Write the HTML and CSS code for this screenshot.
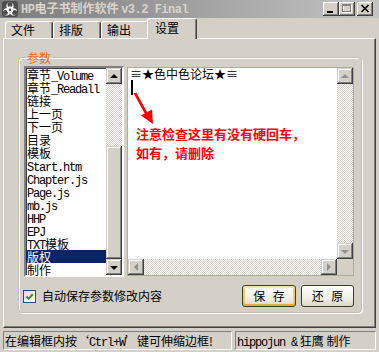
FILE: index.html
```html
<!DOCTYPE html>
<html lang="zh-CN">
<head>
<meta charset="utf-8">
<title>HP电子书制作软件</title>
<link rel="stylesheet" href="styles.css">
</head>
<body>
<div class="window">
  <div class="titlebar">
    <svg class="app-icon" viewBox="0 0 16 16" width="16" height="16">
      <rect x="0" y="0" width="16" height="16" rx="3" fill="#4e4e4e"/>
      <g fill="#fff">
        <circle cx="8" cy="5" r="3.6"/>
        <circle cx="4.6" cy="10.8" r="3.6"/>
        <circle cx="11.4" cy="10.8" r="3.6"/>
      </g>
      <g fill="#4e4e4e">
        <circle cx="8" cy="3.7" r="2.5"/>
        <circle cx="3.4" cy="11.6" r="2.5"/>
        <circle cx="12.6" cy="11.6" r="2.5"/>
        <circle cx="8" cy="8.8" r="1.3"/>
      </g>
      <circle cx="8" cy="8.8" r="3" fill="none" stroke="#fff" stroke-width="1"/>
    </svg>
    <span class="title"><span class="title-en">HP</span>电子书制作软件 <span class="title-en">v3.2 Final</span></span>
    <div class="caption-btns">
      <span class="cbtn"><svg viewBox="0 0 16 14" width="16" height="14"><rect x="4" y="9" width="6" height="2" fill="#000"/></svg></span>
      <span class="cbtn"><svg viewBox="0 0 16 14" width="16" height="14"><rect x="4.5" y="3.5" width="8" height="7" fill="none" stroke="#fff"/><rect x="3.5" y="2.5" width="8" height="7" fill="none" stroke="#808080"/><rect x="3" y="2" width="9" height="2" fill="#808080"/></svg></span>
      <span class="cbtn close"><svg viewBox="0 0 16 14" width="16" height="14"><path d="M4.5 3 L11.5 10 M11.5 3 L4.5 10" stroke="#000" stroke-width="1.6"/></svg></span>
    </div>
  </div>

  <div class="client">
    <div class="tabs">
      <div class="tab">文件</div>
      <div class="tab">排版</div>
      <div class="tab">输出</div>
      <div class="tab active">设置</div>
    </div>

    <div class="panel">
      <fieldset class="group">
        <legend>参数</legend>
        <div class="row-main">
          <div class="listbox">
            <ul class="items">
              <li>章节<span class="en">_Volume</span></li>
              <li>章节<span class="en">_Readall</span></li>
              <li>链接</li>
              <li>上一页</li>
              <li>下一页</li>
              <li>目录</li>
              <li>模板</li>
              <li><span class="en">Start.htm</span></li>
              <li><span class="en">Chapter.js</span></li>
              <li><span class="en">Page.js</span></li>
              <li><span class="en">mb.js</span></li>
              <li><span class="en">HHP</span></li>
              <li><span class="en">EPJ</span></li>
              <li><span class="en">TXT</span>模板</li>
              <li class="sel">版权</li>
              <li>制作</li>
            </ul>
            <div class="vscroll">
              <span class="sb-btn up"></span>
              <span class="sb-track"></span>
              <span class="sb-thumb"></span>
              <span class="sb-btn down"></span>
            </div>
          </div>

          <div class="editor">
            <div class="ed-content">
              <div class="ed-line">≡★色中色论坛★≡</div>
              <span class="caret"></span>
              <svg class="red-arrow" viewBox="0 0 26 32" width="26" height="32">
                <path d="M2 0 L13 20" stroke="#f00" stroke-width="2.6" stroke-linecap="round"/>
                <polygon points="20,31 19,16.5 8,22.5" fill="#f00"/>
              </svg>
              <p class="note">注意检查这里有没有硬回车，<br>如有，请删除</p>
            </div>
            <div class="ed-vscroll">
              <span class="sb-btn up dis"></span>
              <span class="sb-track"></span>
              <span class="sb-btn down dis"></span>
            </div>
            <div class="ed-hscroll">
              <span class="sb-btn left dis"></span>
              <span class="sb-track"></span>
              <span class="sb-btn right dis"></span>
            </div>
            <div class="ed-corner"></div>
          </div>
        </div>

        <div class="row-actions">
          <span class="checkbox"><svg viewBox="0 0 11 11" width="11" height="11"><path d="M2.5 5.5 L4.6 7.8 L8.8 3" fill="none" stroke="#21a121" stroke-width="2"/></svg></span>
          <span class="check-label">自动保存参数修改内容</span>
          <div class="buttons">
            <button class="btn default">保 存</button>
            <button class="btn">还 原</button>
          </div>
        </div>
      </fieldset>
    </div>

    <div class="statusbar">
      <div class="sb-panel left">在编辑框内按‘<span class="en">Ctrl+W</span>’键可伸缩边框!</div>
      <div class="sb-panel right"><span class="en">hippojun &amp;</span> 狂鹰 制作</div>
    </div>
  </div>
</div>
</body>
</html>
```

FILE: styles.css
```css
* { box-sizing: border-box; }

html, body {
  margin: 0;
  padding: 0;
}

body {
  width: 379px;
  height: 352px;
  overflow: hidden;
  background: #d4d0c8;
  color: #000;
  font: 12px/1.2 "Noto Sans CJK SC", "Liberation Sans", sans-serif;
}

.en {
  font-family: "Liberation Mono", monospace;
  font-size: 12px;
  letter-spacing: -1.2px;
}

.window {
  width: 379px;
  height: 352px;
  display: flex;
  flex-direction: column;
}

/* title bar */
.titlebar {
  height: 18px;
  flex: none;
  display: flex;
  align-items: center;
  padding-left: 2px;
  background: linear-gradient(90deg, #7c7c7c, #c4c4c4);
  color: #d8d4cc;
}

.app-icon { flex: none; }

.title {
  margin-left: 3px;
  font-weight: bold;
  white-space: nowrap;
  line-height: 18px;
}

.title-en {
  font-family: "Liberation Mono", monospace;
  font-size: 12px;
  letter-spacing: -0.5px;
}

.caption-btns {
  margin-left: auto;
  margin-right: 6px;
  display: flex;
}

.cbtn {
  display: block;
  width: 16px;
  height: 14px;
  background: #d4d0c8;
  box-shadow: inset -1px -1px #404040, inset 1px 1px #fff, inset -2px -2px #808080;
}

.cbtn svg { display: block; }
.cbtn.close { margin-left: 2px; }

/* client */
.client {
  flex: 1;
  display: flex;
  flex-direction: column;
  padding: 0 3px 0 3px;
}

.tabs {
  height: 20px;
  display: flex;
  align-items: flex-end;
  padding-left: 2px;
  position: relative;
  z-index: 1;
}

.tab {
  width: 48px;
  height: 17px;
  padding-left: 5px;
  line-height: 15px;
  background: #d4d0c8;
  border: 1px solid;
  border-bottom: none;
  border-color: #fff #404040 transparent #fff;
  border-radius: 3px 3px 0 0;
  box-shadow: inset -1px 0 #808080;
}

.tab.active {
  width: 50px;
  height: 21px;
  margin-left: -2px;
  margin-bottom: -1px;
  padding-left: 7px;
  line-height: 17px;
  position: relative;
  z-index: 2;
}

.panel {
  height: 290px;
  border: 1px solid;
  border-color: #fff #404040 #404040 #fff;
  box-shadow: inset -1px -1px #808080;
}

/* group */
.group {
  width: 344px;
  margin: 12px 0 0 14px;
  padding: 2px 7px 5px 5px;
  border: 1px solid #c2beb2;
  border-radius: 4px;
  box-shadow: inset 1px 1px #fff, 1px 1px #fff;
  min-width: 0;
}

.group legend {
  margin-left: 1px;
  padding: 0 2px;
  line-height: 13px;
  color: #e06c2c;
}

.row-main {
  display: flex;
  align-items: flex-start;
  gap: 3px;
}

/* list box */
.listbox {
  width: 100px;
  height: 211px;
  display: flex;
  background: #fff;
  border: 2px solid;
  border-color: #808080 #fff #fff #808080;
  box-shadow: inset 1px 1px #404040;
}

.items {
  flex: 1;
  min-width: 0;
  list-style: none;
  margin: 0;
  padding: 0;
}

.items li {
  height: 13px;
  line-height: 13px;
  padding-left: 1px;
  white-space: nowrap;
}

.items li.sel {
  background: #0a246a;
  color: #fff;
}

.vscroll {
  width: 16px;
  display: flex;
  flex-direction: column;
}

.sb-btn {
  flex: none;
  width: 16px;
  height: 16px;
  display: flex;
  align-items: center;
  justify-content: center;
  background: #d4d0c8;
  box-shadow: inset -1px -1px #404040, inset 1px 1px #d4d0c8, inset -2px -2px #808080, inset 2px 2px #fff;
}

.sb-btn::after {
  content: "";
  width: 0;
  height: 0;
  border: 4px solid transparent;
}

.sb-btn.up::after { border-top: 0; border-bottom-color: #000; margin-top: -1px; }
.sb-btn.down::after { border-bottom: 0; border-top-color: #000; margin-top: 1px; }
.sb-btn.left::after { border-left: 0; border-right-color: #000; }
.sb-btn.right::after { border-right: 0; border-left-color: #000; }

.sb-btn.dis.up::after { border-bottom-color: #909090; }
.sb-btn.dis.down::after { border-top-color: #909090; }
.sb-btn.dis.left::after { border-right-color: #909090; }
.sb-btn.dis.right::after { border-left-color: #909090; }

.sb-track {
  flex: 1;
  background-image: repeating-conic-gradient(#d4d0c8 0 25%, #fff 0 50%);
  background-size: 2px 2px;
}

.sb-thumb {
  flex: none;
  height: 113px;
  background: #d4d0c8;
  box-shadow: inset -1px -1px #404040, inset 1px 1px #d4d0c8, inset -2px -2px #808080, inset 2px 2px #fff;
}

/* editor */
.editor {
  width: 227px;
  height: 209px;
  margin-top: 1px;
  border: 1px solid #a9b094;
  background: #fff;
  display: grid;
  grid-template-columns: 1fr 16px;
  grid-template-rows: 1fr 16px;
}

.ed-content {
  padding-left: 2px;
  min-width: 0;
  min-height: 0;
}

.ed-line {
  height: 12px;
  line-height: 12px;
  white-space: nowrap;
}

.caret {
  display: block;
  width: 2px;
  height: 15px;
  margin-left: 1px;
  background: #000;
}

.red-arrow {
  display: block;
  margin: -2px 0 0 3px;
}

.note {
  margin: -1px 0 0 6px;
  color: #f00;
  font-weight: bold;
  font-size: 13px;
  line-height: 19px;
  white-space: nowrap;
}

.ed-vscroll {
  display: flex;
  flex-direction: column;
}

.ed-hscroll {
  display: flex;
}

.ed-corner { background: #d4d0c8; }

/* action row */
.row-actions {
  display: flex;
  align-items: center;
  height: 22px;
  margin-top: 8px;
}

.checkbox {
  width: 13px;
  height: 13px;
  margin-left: -1px;
  border: 1px solid #1c5180;
  background: linear-gradient(135deg, #dcdcd7, #fff);
}

.checkbox svg { display: block; }

.check-label {
  margin-left: 6px;
  line-height: 14px;
}

.buttons {
  margin-left: auto;
  display: flex;
  gap: 5px;
}

.btn {
  width: 54px;
  height: 22px;
  padding: 0;
  font: inherit;
  line-height: 18px;
  word-spacing: 5px;
  color: #000;
  border: 1px solid #34421f;
  border-radius: 3px;
  background: linear-gradient(#fff, #f1efe6 60%, #dcd7c8);
}

.btn + .btn { width: 53px; }

.btn.default {
  box-shadow: inset 0 2px #fde6a2, inset 0 -2px #e9ab3c, inset 2px 0 #f6c860, inset -2px 0 #f6c860;
}

/* status bar */
.statusbar {
  height: 19px;
  margin-top: 3px;
  display: flex;
  gap: 3px;
}

.sb-panel {
  height: 19px;
  padding-left: 1px;
  line-height: 17px;
  white-space: nowrap;
  overflow: hidden;
  border: 1px solid;
  border-color: #808080 #fff #fff #808080;
}

.sb-panel.left { width: 229px; }
.sb-panel.right { flex: 1; }
```
